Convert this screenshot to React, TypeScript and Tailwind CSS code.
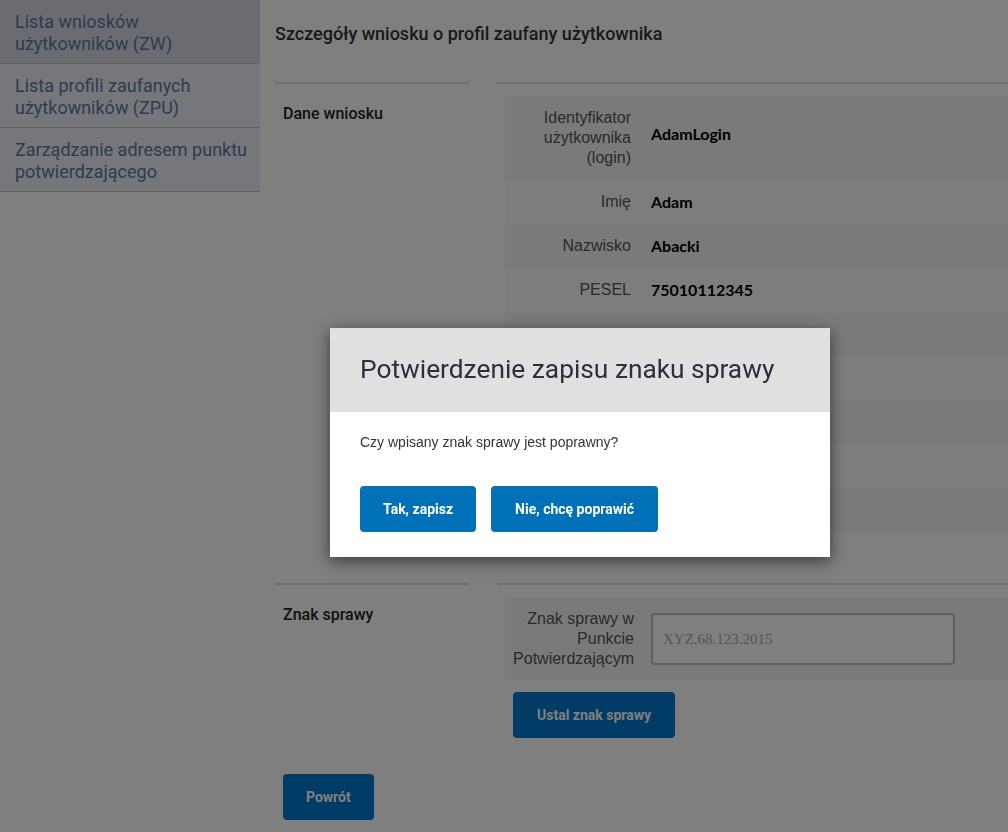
import React from 'react'

const ROWS: { label: string[]; value: string }[] = [
  { label: ['Identyfikator', 'użytkownika', '(login)'], value: 'AdamLogin' },
  { label: ['Imię'], value: 'Adam' },
  { label: ['Nazwisko'], value: 'Abacki' },
  { label: ['PESEL'], value: '75010112345' },
  { label: [''], value: '' },
  { label: [''], value: '' },
  { label: [''], value: '' },
  { label: [''], value: '' },
  { label: [''], value: '' },
]

const NAV = [
  { label: 'Lista wniosków użytkowników (ZW)', active: true },
  { label: 'Lista profili zaufanych użytkowników (ZPU)', active: false },
  { label: 'Zarządzanie adresem punktu potwierdzającego', active: false },
]

const roboto = { fontFamily: 'Roboto, "Noto Sans", sans-serif' }
const arial = { fontFamily: '"Liberation Sans", Arial, sans-serif' }
const valueFont = { fontFamily: 'Lato, "Open Sans", sans-serif' }

export default function App() {
  return (
    <div className="relative min-h-screen bg-white flex" style={roboto}>
      <aside className="w-[260px] shrink-0">
        {NAV.map(item => (
          <div
            key={item.label}
            className={`h-[64px] pl-[15px] pr-[6px] pt-[3px] flex items-center border-b border-[#bfc1cb] text-[18px] leading-[22px] text-[#5d76a3] ${item.active ? 'bg-[#d6d8e2]' : 'bg-[#eceef6]'}`}
          >
            <span>{item.label}</span>
          </div>
        ))}
      </aside>

      <main className="flex-1 pl-[15px]">
        <h1 className="h-[66px] flex items-center text-[18px] font-medium text-[#333]">
          Szczegóły wniosku o profil zaufany użytkownika
        </h1>

        <section className="mt-[16px] flex gap-[28px]">
          <div className="w-[194px] border-t-2 border-[#dcdcdc] pt-[20px] pl-[8px]">
            <h2 className="text-[16px] leading-[20px] font-medium text-[#222]">Dane wniosku</h2>
          </div>
          <div className="flex-1 border-t-2 border-[#dcdcdc] pt-[12px] pl-[8px] pb-[51px]">
            {ROWS.map((r, i) => (
              <div
                key={i}
                className={`flex items-center ${r.label.length > 1 ? 'py-[12px]' : 'h-[44px]'} ${i % 2 === 0 ? 'bg-[#f4f4f4]' : 'bg-[#fbfbfb]'}`}
              >
                <div className="w-[126px] text-right text-[16px] leading-[20px] text-[#555]" style={arial}>
                  {r.label.map((l, j) => (
                    <div key={j}>{l}</div>
                  ))}
                </div>
                <div className={`ml-[20px] text-[16px] font-bold text-black ${i === 0 ? '-mt-[8px]' : ''}`} style={valueFont}>
                  {r.value}
                </div>
              </div>
            ))}
          </div>
        </section>

        <section className="flex gap-[28px]">
          <div className="w-[194px] border-t-2 border-[#dcdcdc] pt-[20px] pl-[8px]">
            <h2 className="text-[16px] leading-[20px] font-medium text-[#222]">Znak sprawy</h2>
          </div>
          <div className="flex-1 border-t-2 border-[#dcdcdc] pt-[12px] pl-[8px]">
            <div className="flex items-center pt-[12px] pb-[11px] bg-[#f4f4f4]">
              <div className="w-[129px] text-right text-[16px] leading-[20px] text-[#555]" style={arial}>
                <div>Znak sprawy w</div>
                <div>Punkcie</div>
                <div>Potwierdzającym</div>
              </div>
              <input
                className="ml-[17px] w-[304px] h-[52px] rounded-[4px] border-2 border-[#bcbfca] bg-white px-[10px] text-[15px] placeholder:text-[#a9abb3] outline-none"
                style={{ fontFamily: '"Liberation Serif", "Times New Roman", serif' }}
                placeholder="XYZ.68.123.2015"
              />
            </div>
            <button className="mt-[12px] ml-[8px] h-[46px] px-[24px] rounded-[4px] bg-[#0078cc] text-white text-[14px] font-bold">
              Ustal znak sprawy
            </button>
          </div>
        </section>

        <div className="pl-[8px] mt-[36px] pb-[12px]">
          <button className="h-[46px] px-[23px] rounded-[4px] bg-[#0078cc] text-white text-[14px] font-bold">
            Powrót
          </button>
        </div>
      </main>

      <div className="fixed inset-0 bg-black/50" />

      <div className="absolute left-[330px] top-[328px] w-[500px] bg-white shadow-[0_4px_14px_rgba(0,0,0,0.55)]">
        <div className="h-[84px] bg-[#e0e0e0] px-[30px] flex items-center">
          <h3 className="text-[26.3px] text-[#2b2f3e]">Potwierdzenie zapisu znaku sprawy</h3>
        </div>
        <div className="px-[30px] pt-[21px] pb-[25px]">
          <p className="text-[14px] leading-[18px] text-[#333]" style={arial}>
            Czy wpisany znak sprawy jest poprawny?
          </p>
          <div className="mt-[35px] flex gap-[15px]">
            <button className="h-[46px] px-[23px] rounded-[4px] bg-[#0070b8] text-white text-[14px] font-bold">
              Tak, zapisz
            </button>
            <button className="h-[46px] px-[24px] rounded-[4px] bg-[#0070b8] text-white text-[14px] font-bold">
              Nie, chcę poprawić
            </button>
          </div>
        </div>
      </div>
    </div>
  )
}
